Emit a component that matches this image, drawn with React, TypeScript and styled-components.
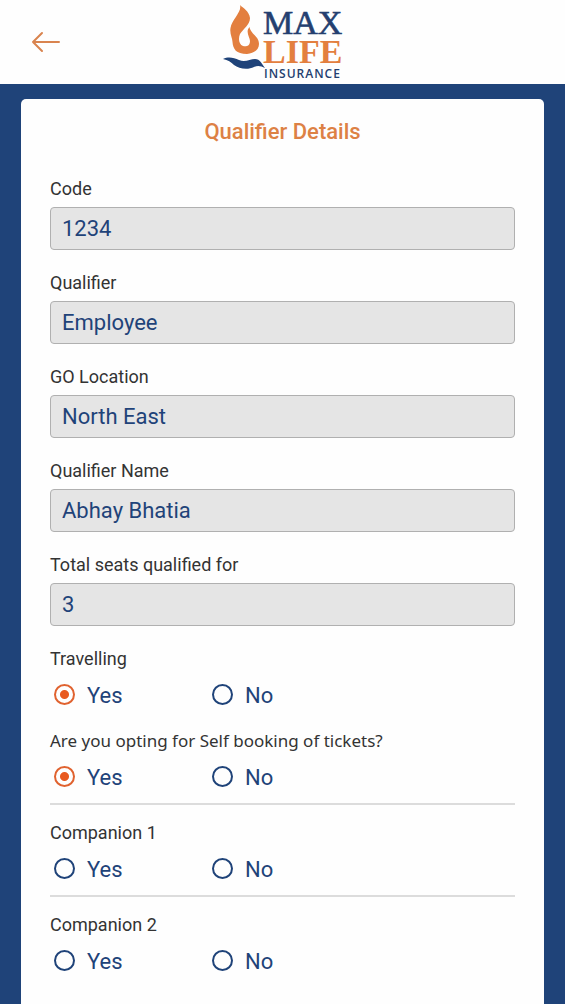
import React from 'react';
import styled, { createGlobalStyle } from 'styled-components';

const navy = '#1f4379';
const orange = '#e37f3f';

const GlobalStyle = createGlobalStyle`
  * { box-sizing: border-box; }
  body { margin: 0; background: ${navy}; font-family: Roboto, sans-serif; }
`;

const Page = styled.div`
  display: flex;
  flex-direction: column;
  min-height: 100vh;
  background: ${navy};
`;

const Header = styled.header`
  display: grid;
  grid-template-columns: 1fr auto 1fr;
  align-items: center;
  height: 84px;
  padding: 0 28px;
  background: #fefefe;
`;

const BackButton = styled.button`
  display: flex;
  justify-self: start;
  padding: 0;
  border: 0;
  background: none;
  cursor: pointer;
`;

const Card = styled.main`
  flex: 1;
  margin: 15px 21px 0;
  padding: 18px 29px 29px;
  border-radius: 5px 5px 0 0;
  background: #fefefe;
`;

const Title = styled.h1`
  margin: 0 0 32px;
  color: #dd8145;
  font-size: 22px;
  font-weight: 500;
  line-height: 30px;
  text-align: center;
`;

const Field = styled.div`
  display: flex;
  flex-direction: column;
  gap: 8px;
  margin-bottom: 23px;
`;

const Label = styled.label`
  color: #333;
  font-size: 18px;
  line-height: 20px;
`;

const TextBox = styled.input`
  width: 100%;
  height: 43px;
  padding: 0 11px;
  border: 1px solid #b0b0b0;
  border-radius: 4px;
  outline: 0;
  background: #e5e5e5;
  color: ${navy};
  font-family: inherit;
  font-size: 22px;
`;

const Group = styled.fieldset<{ $ruled?: boolean }>`
  min-width: 0;
  margin: 0 0 ${p => (p.$ruled ? 18 : 22)}px;
  padding: 0 0 ${p => (p.$ruled ? 12 : 0)}px;
  border: 0;
  border-bottom: ${p => (p.$ruled ? '2px solid #dcdcdc' : '0')};
`;

const Legend = styled.legend<{ $humanist?: boolean }>`
  margin-bottom: 10px;
  padding: 0;
  color: #333;
  font-family: ${p => (p.$humanist ? "'Noto Sans', sans-serif" : 'inherit')};
  font-size: ${p => (p.$humanist ? 17 : 18)}px;
  line-height: 20px;
`;

const Options = styled.div`
  display: flex;
  padding-left: 4px;
`;

const Option = styled.label`
  display: flex;
  align-items: center;
  gap: 12px;
  width: 158px;
  color: ${navy};
  font-size: 22px;
`;

const OptionText = styled.span`
  padding-top: 4px;
  line-height: 26px;
`;

const Radio = styled.input`
  appearance: none;
  width: 21px;
  height: 21px;
  margin: 0;
  border: 2px solid ${navy};
  border-radius: 50%;
  &:checked {
    border-color: #e0622f;
    background: radial-gradient(circle, #e85a20 4px, transparent 5px);
  }
`;

const Logo = () => (
  <svg width="122" height="78" viewBox="0 0 122 78" role="img" aria-label="Max Life Insurance">
    <path
      d="M18 2C20 9 10 16 8.500 25C7.500 31 10.500 35 10.500 39C11 46 14 51 25 51C32 50 37 47 37 41C37 33 28.500 31 27.500 24C23 29 28 34 28 38C28 43 24 44 21 43C17 41 16 36 18 31C21 26 28 22 28 15C27 8 21 5 18 2Z"
      fill={orange}
    />
    <path
      d="M1 56C7 53 12 55 17 57C23 60 28 56 33 56C38 56 40 61 43 65C39 63 36 62 32 64C26 67 17 66 12 62C9 59 6 57 1 56Z"
      fill={navy}
    />
    <g fontFamily="'Liberation Serif', serif">
      <text x="41" y="31" fontSize="34" fill="#243f70" stroke="#243f70" strokeWidth="0.6">MAX</text>
      <text x="41" y="60" fontSize="34" fontWeight="700" fill={orange}>LIFE</text>
    </g>
    <text x="42" y="75" fontFamily="'Open Sans', sans-serif" fontSize="12" fontWeight="600" letterSpacing="1" fill="#243f70">
      INSURANCE
    </text>
  </svg>
);

const fields = [
  { id: 'code', label: 'Code', value: '1234' },
  { id: 'qualifier', label: 'Qualifier', value: 'Employee' },
  { id: 'location', label: 'GO Location', value: 'North East' },
  { id: 'name', label: 'Qualifier Name', value: 'Abhay Bhatia' },
  { id: 'seats', label: 'Total seats qualified for', value: '3' },
];

const questions = [
  { id: 'travelling', label: 'Travelling', answer: 'Yes' },
  { id: 'booking', label: 'Are you opting for Self booking of tickets?', answer: 'Yes', ruled: true, humanist: true },
  { id: 'companion1', label: 'Companion 1', ruled: true },
  { id: 'companion2', label: 'Companion 2' },
];

export default function App() {
  return (
    <Page>
      <GlobalStyle />
      <Header>
        <BackButton type="button" aria-label="Back">
          <svg width="36" height="24" viewBox="0 0 36 24" fill="none" stroke="#d9844f" strokeWidth="2" strokeLinecap="round" strokeLinejoin="round">
            <path d="M14 3L5 12L14 21M5 12H31" />
          </svg>
        </BackButton>
        <Logo />
      </Header>
      <Card>
        <Title>Qualifier Details</Title>
        {fields.map(f => (
          <Field key={f.id}>
            <Label htmlFor={f.id}>{f.label}</Label>
            <TextBox id={f.id} type="text" readOnly value={f.value} />
          </Field>
        ))}
        {questions.map(q => (
          <Group key={q.id} $ruled={q.ruled}>
            <Legend $humanist={q.humanist}>{q.label}</Legend>
            <Options>
              {['Yes', 'No'].map(choice => (
                <Option key={choice}>
                  <Radio type="radio" name={q.id} value={choice} defaultChecked={q.answer === choice} />
                  <OptionText>{choice}</OptionText>
                </Option>
              ))}
            </Options>
          </Group>
        ))}
      </Card>
    </Page>
  );
}
